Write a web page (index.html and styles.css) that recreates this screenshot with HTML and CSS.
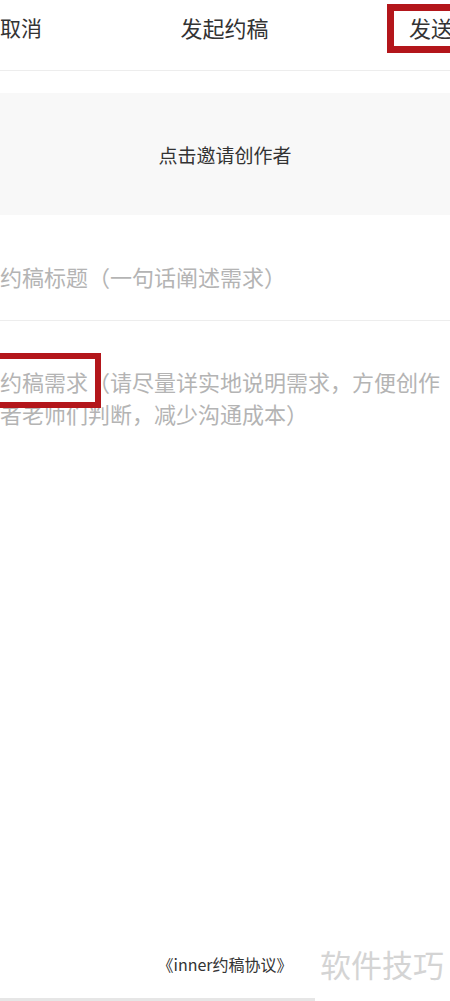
FILE: index.html
```html
<!DOCTYPE html>
<html lang="zh-CN">
<head>
    <meta charset="UTF-8">
    <meta name="viewport" content="width=device-width, initial-scale=1.0">
    <title>发起约稿</title>
    <link rel="stylesheet" href="styles.css">
</head>
<body>
    <div class="page">
        <header class="topbar">
            <span class="cancel">取消</span>
            <h1 class="title">发起约稿</h1>
            <span class="send">发送</span>
            <div class="mark mark-send"></div>
        </header>

        <div class="invite">点击邀请创作者</div>

        <div class="field field-title">约稿标题（一句话阐述需求）</div>

        <div class="field field-body">
            约稿需求（请尽量详实地说明需求，方便创作者老师们判断，减少沟通成本）
            <div class="mark mark-body"></div>
        </div>

        <footer class="footer">
            <p class="agreement">《inner约稿协议》</p>
            <div class="home-bar"></div>
            <span class="watermark">软件技巧</span>
        </footer>
    </div>
</body>
</html>
```

FILE: styles.css
```css
:root {
    --text-dark: #333333;
    --text-hint: #b4b4b4;
    --line: #ededed;
    --panel: #f8f8f8;
    --mark-red: #b3161b;
}
* {
    box-sizing: border-box;
}
body {
    margin: 0;
    font-family: "Noto Sans CJK SC", "Noto Sans", sans-serif;
    background: #ffffff;
    color: var(--text-dark);
    overflow: hidden;
}
.page {
    width: 450px;
    min-height: 100vh;
    display: flex;
    flex-direction: column;
    position: relative;
}
.topbar {
    position: relative;
    height: 71px;
    display: flex;
    justify-content: space-between;
    align-items: center;
    padding-bottom: 17px;
    border-bottom: 1px solid var(--line);
    font-size: 21px;
}
.title {
    margin: 0;
    font-size: 22px;
    font-weight: 400;
    margin-left: -2px;
}
.send {
    font-size: 22px;
    margin-right: -3px;
}
.mark {
    position: absolute;
    border: 7px solid var(--mark-red);
}
.mark-send {
    left: 387px;
    top: 4px;
    width: 70px;
    height: 49px;
}
.invite {
    margin-top: 22px;
    height: 122px;
    background: var(--panel);
    display: flex;
    align-items: center;
    justify-content: center;
    font-size: 19px;
    color: var(--text-dark);
}
.field {
    font-size: 22px;
    line-height: 32px;
    color: var(--text-hint);
}
.field-title {
    padding: 45px 0 28px;
    border-bottom: 1px solid var(--line);
}
.field-body {
    position: relative;
    padding-top: 44px;
    flex: 1;
}
.mark-body {
    left: -10px;
    top: 32px;
    width: 111px;
    height: 55px;
    border-width: 6px;
}
.footer {
    position: relative;
    display: flex;
    flex-direction: column;
    align-items: center;
}
.agreement {
    margin: 0 0 22px;
    font-size: 16px;
    line-height: 24px;
    color: var(--text-dark);
}
.home-bar {
    align-self: flex-start;
    width: 315px;
    height: 3px;
    background: #e6e6e6;
}
.watermark {
    position: absolute;
    left: 320px;
    top: -8px;
    font-size: 31px;
    line-height: 40px;
    color: #d4d4d4;
    white-space: nowrap;
}
```
